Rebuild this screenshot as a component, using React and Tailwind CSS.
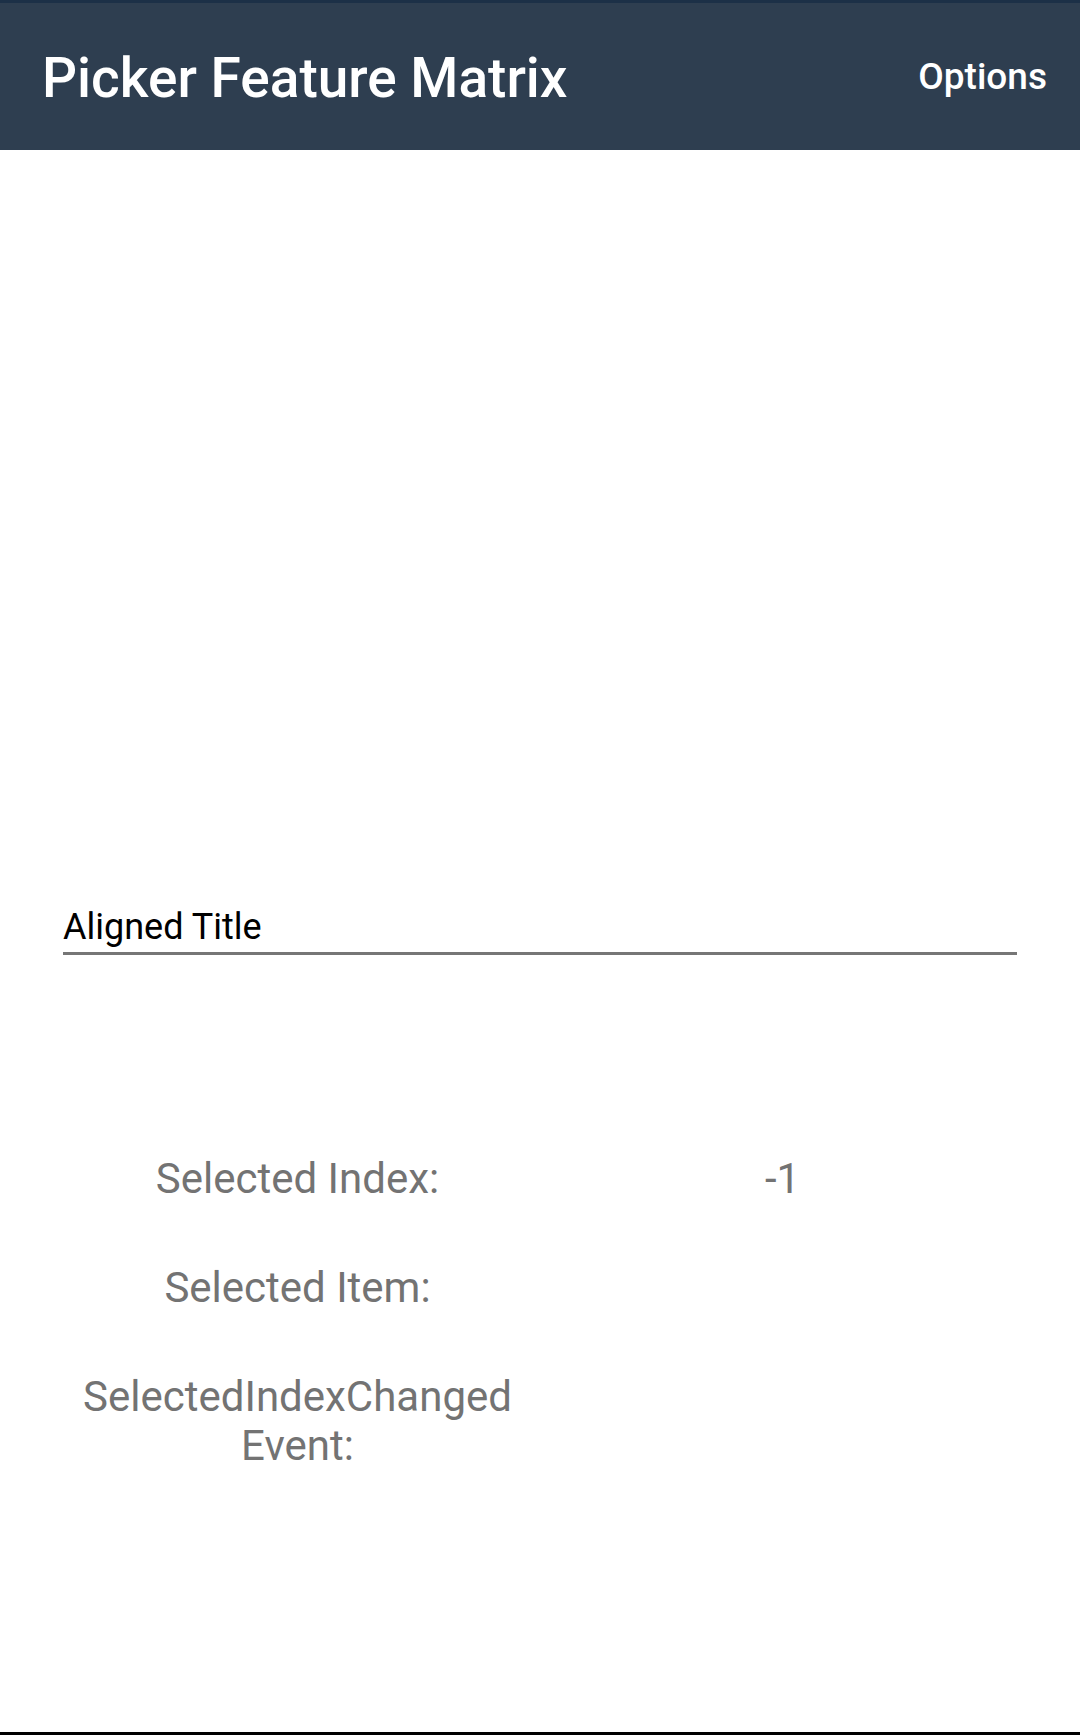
import React from 'react';

const rows = [
  { label: 'Selected Index:', value: '-1' },
  { label: 'Selected Item:', value: '' },
  { label: 'SelectedIndexChanged Event:', value: '' },
];

const App = () => {
  return (
    <div className="flex h-[1735px] w-[1080px] flex-col bg-white font-['Roboto',sans-serif]">
      {/* toolbar */}
      <div className="flex h-[150px] items-center justify-between border-t-[3px] border-[#1c3047] bg-[#2e3e50] pl-[42px] pr-[33px]">
        <h1 className="pt-[3px] text-[55px] font-medium leading-none text-white">Picker Feature Matrix</h1>
        <button type="button" className="text-[37px] font-medium leading-none text-white">
          Options
        </button>
      </div>

      {/* picker area (empty) */}
      <div className="h-[757px]" />

      <div className="mx-[63px] border-b-[3px] border-[#767676] pb-[5px] text-[36px] leading-[40px] text-black">
        Aligned Title
      </div>

      <div className="mx-[55px] mt-[199px] flex flex-col gap-[60px]">
        {rows.map((row) => (
          <div key={row.label} className="grid grid-cols-2 text-[42px] leading-[49px] text-[#737373]">
            <div className="text-center">{row.label}</div>
            <div className="text-center">{row.value}</div>
          </div>
        ))}
      </div>

      <div className="flex-1" />
      <div className="h-[3px] bg-black" />
    </div>
  );
};

export default App;
